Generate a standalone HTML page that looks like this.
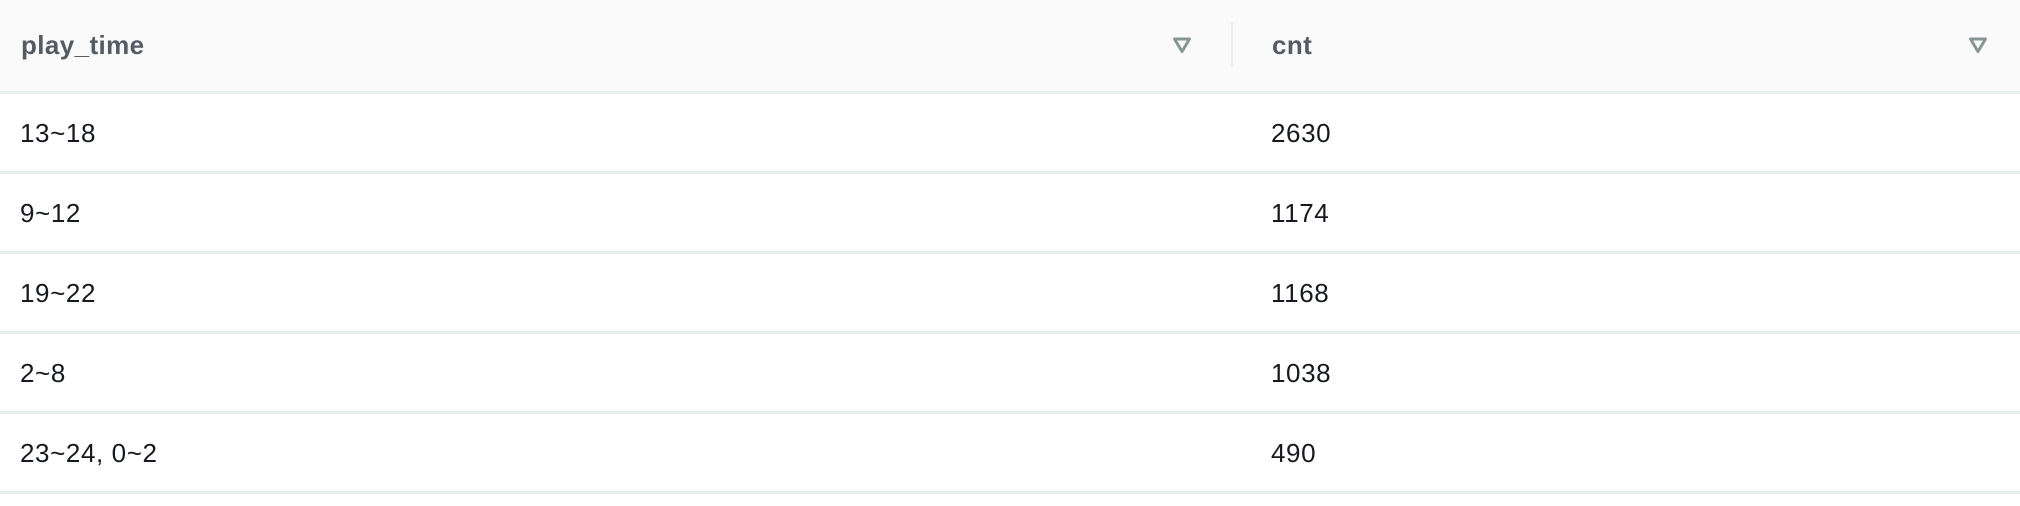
<!DOCTYPE html>
<html><head><style>
*{margin:0;padding:0;box-sizing:border-box}
body{width:2020px;height:506px;background:#fff;font-family:"Liberation Sans",Arial,sans-serif;overflow:hidden;position:relative}
.hdr{position:absolute;left:0;top:0;width:2020px;height:94px;background:#fafafa;border-bottom:3px solid #eaeded}
.h{position:absolute;top:0;height:90px;line-height:90px;font-size:26px;font-weight:bold;color:#545b64;letter-spacing:0.4px}
.div{position:absolute;left:1231px;top:22px;width:2px;height:45px;background:#eaeded}
.tri{position:absolute;top:36px}
.row{position:absolute;left:0;width:2020px;height:80px;border-bottom:3px solid #eaeded}
.c{position:absolute;top:1px;line-height:77px;font-size:26px;color:#16191f;letter-spacing:0.6px}
</style></head><body>
<div class="hdr">
<div class="h" style="left:21px">play_time</div>
<svg class="tri" style="left:1172px" width="20" height="18" viewBox="0 0 20 18"><path d="M2.5 3 L17.5 3 L10 15.5 Z" fill="none" stroke="#879596" stroke-width="3" stroke-linejoin="round"/></svg>
<div class="div"></div>
<div class="h" style="left:1272px">cnt</div>
<svg class="tri" style="left:1968px" width="20" height="18" viewBox="0 0 20 18"><path d="M2.5 3 L17.5 3 L10 15.5 Z" fill="none" stroke="#879596" stroke-width="3" stroke-linejoin="round"/></svg>
</div>
<div class="row" style="top:94px"><div class="c" style="left:20px">13~18</div><div class="c" style="left:1271px">2630</div></div>
<div class="row" style="top:174px"><div class="c" style="left:20px">9~12</div><div class="c" style="left:1271px">1174</div></div>
<div class="row" style="top:254px"><div class="c" style="left:20px">19~22</div><div class="c" style="left:1271px">1168</div></div>
<div class="row" style="top:334px"><div class="c" style="left:20px">2~8</div><div class="c" style="left:1271px">1038</div></div>
<div class="row" style="top:414px"><div class="c" style="left:20px">23~24, 0~2</div><div class="c" style="left:1271px">490</div></div>
</body></html>
